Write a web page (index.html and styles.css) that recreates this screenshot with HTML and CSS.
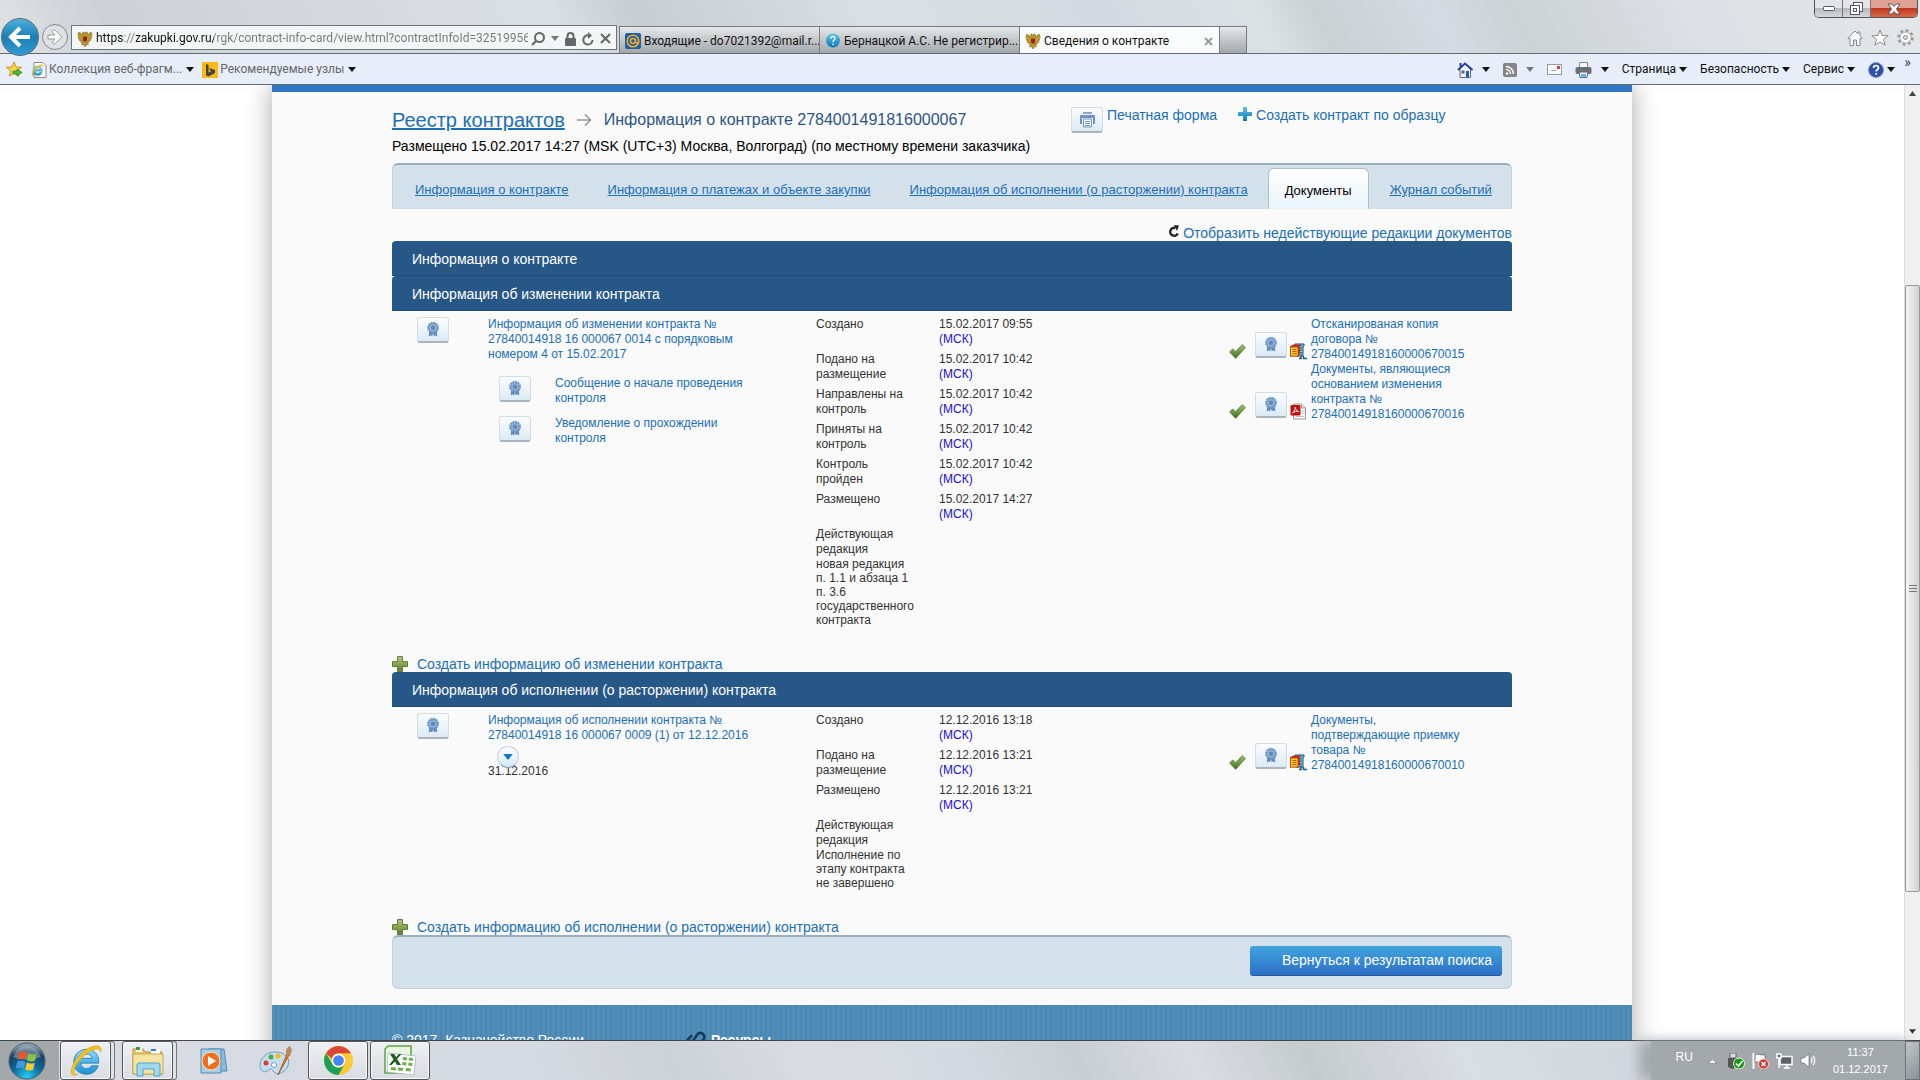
FILE: index.html
```html
<!DOCTYPE html>
<html lang="ru">
<head>
<meta charset="utf-8">
<title>Сведения о контракте</title>
<link rel="stylesheet" href="styles.css">
</head>
<body>
<svg class="sprite" aria-hidden="true">
  <defs>
    <linearGradient id="g-check" x1="0" y1="0" x2="0" y2="1"><stop offset="0" stop-color="#9cc46b"/><stop offset="1" stop-color="#3f6e1c"/></linearGradient>
    <linearGradient id="g-plus" x1="0" y1="0" x2="0" y2="1"><stop offset="0" stop-color="#b3cb84"/><stop offset="1" stop-color="#577f1e"/></linearGradient>
    <linearGradient id="g-blue" x1="0" y1="0" x2="0" y2="1"><stop offset="0" stop-color="#5fc4e8"/><stop offset="1" stop-color="#0f79b5"/></linearGradient>
    <radialGradient id="g-orb" cx=".5" cy=".95" r=".9"><stop offset="0" stop-color="#25d0f5"/><stop offset=".45" stop-color="#0e6a9c"/><stop offset=".8" stop-color="#1d3f5e"/><stop offset="1" stop-color="#90a4b5"/></radialGradient>
    <linearGradient id="g-ie" x1="0" y1="0" x2="0" y2="1"><stop offset="0" stop-color="#8fdcf8"/><stop offset="1" stop-color="#1a8fd2"/></linearGradient>
  </defs>
  <symbol id="i-medal" viewBox="0 0 16 18">
    <path d="M4 10 3 17l2.500-1.500L7 17l1-4 1 4 1.500-1.500L13 17l-1-7z" fill="#5d88b8"/>
    <circle cx="8" cy="7" r="5.800" fill="#7ea3cd" stroke="#6b94c2" stroke-width="2" stroke-dasharray="2 1"/>
    <circle cx="8" cy="7" r="3.300" fill="#5c8abf" stroke="#a9c4e0"/>
  </symbol>
  <symbol id="i-check" viewBox="0 0 16 14"><path d="M.5 7.500 3.500 4.500 6 7.200 12.500.5l3 2.800L6.300 13.500z" fill="url(#g-check)" stroke="#5d7f42" stroke-width=".7"/></symbol>
  <symbol id="i-plus" viewBox="0 0 16 16"><path d="M5.500.6h5v5h5v5h-5v5h-5v-5h-5v-5h5z" fill="url(#g-plus)" stroke="#5c7a35"/></symbol>
  <symbol id="i-zip" viewBox="0 0 17 17">
    <path d="M5 1h9v2h-1v10H6z" fill="#8fd0ee" stroke="#14506f"/>
    <path d="M11 1.500v12" stroke="#2676a3" stroke-width="2" stroke-dasharray="1.500 1"/>
    <path d="M0 3.500 3 1.500h7V11l-2 2.500H0z" fill="#c22f1c"/><rect x=".5" y="4" width="7.500" height="9" fill="#fccb1c" stroke="#a2441a" stroke-width=".7"/>
    <path d="M2.500 6.500h4M2.500 8.500h4M2.500 10.500h4" stroke="#b45a0c"/><path d="M9 15.500h2V13M13.500 13v2.500H17" stroke="#1c5c80" stroke-width="1.500" fill="none"/>
  </symbol>
  <symbol id="i-pdf" viewBox="0 0 16 17">
    <path d="M3 1h8l4 4v11H3z" fill="#fafafa" stroke="#999"/><path d="M11 1v4h4" fill="#ddd" stroke="#999"/>
    <path d="M11 8h3M11 10h3M5 13.500h8" stroke="#bbb"/>
    <rect x="0" y="2" width="10" height="10.500" rx="1" fill="#c01010"/>
    <path d="M2 10c2-2 3-5 2.700-6 .3 2 1.500 4 3.300 4.500-2-.5-4 0-6 1.500z" fill="none" stroke="#fff" stroke-width=".9"/>
  </symbol>
  <symbol id="i-eagle" viewBox="0 0 16 18">
    <path d="M1 3c2-1 3 0 4 2l1-3h1l1 2 1-2h1l1 3c1-2 2-3 4-2l-1 1 1.500 1L14 6.500l1 1.500-1.800.5.800 1.800-2 .2v2l-2-.5 1.500 3-2-.5L8 17l-1.500-2.500-2 .5L6 12l-2 .5v-2l-2-.2.800-1.800L1 8l1-1.500L.5 5 2 4z" fill="#b89a2c" stroke="#7c6412" stroke-width=".6"/>
    <path d="M6 6.500h4v4L8 12l-2-1.500z" fill="#a51d1a"/>
  </symbol>
  <symbol id="i-e" viewBox="0 0 32 32">
    <path d="M28 18H11c.5 3.500 2.500 5 5.500 5 2.300 0 3.600-.8 4.500-2.500h6.500C26 25.500 22 28.500 16.500 28.500 9.500 28.500 4.500 24 4.500 17S9.500 5 16.500 5 28.500 10 28 18zM11.300 13.500h10.300c-.5-2.700-2.300-4-5-4s-4.600 1.300-5.300 4z" fill="url(#g-ie)" stroke="#1377b3" stroke-width=".7"/>
    <path d="M3 29C-1 25 8 8 20 3c5-2 9-2 10 1 .6 1.500 0 3-.5 4 0-3-2-4-6-2.500C13 9 3 23 5 27.500c.5 1 2 1 3.500.5-2 1.500-4 2-5.500 1z" fill="#f4bf20" stroke="#c9951a" stroke-width=".4"/>
  </symbol>
  <symbol id="i-caret" viewBox="0 0 8 5"><path d="M0 0h8L4 5z" fill="currentColor"/></symbol>
</svg>

<div class="desktop">
  <header class="browser">
    <div class="window-buttons">
      <button aria-label="Свернуть"><svg width="12" height="6"><rect x=".5" y=".5" width="11" height="4" rx="1" fill="#fff" stroke="#555"/></svg></button>
      <button aria-label="Восстановить"><svg width="13" height="13" fill="#fff" stroke="#555"><rect x="3.500" y=".5" width="9" height="9"/><rect x=".5" y="3.500" width="9" height="9"/><rect x="3.500" y="6.500" width="3" height="3"/></svg></button>
      <button class="close" aria-label="Закрыть"><svg width="14" height="12"><path d="M1 1h4l2 2.500L9 1h4L9.500 6l3.500 5H9L7 8.500 5 11H1l3.500-5z" fill="#fff" stroke="#555"/></svg></button>
    </div>
    <div class="nav-row">
      <div class="nav-buttons">
        <button class="back" aria-label="Назад"><svg width="24" height="22" fill="none" stroke="#fff" stroke-width="4"><path d="M22 11H4M12 2l-9 9 9 9"/></svg></button>
        <button class="forward" aria-label="Вперёд"><svg width="16" height="16" fill="#fff" stroke="#999"><path d="M1 6h7L5 2.500 7.500.8 15 8l-7.500 7.200L5 13.500 8 10H1z"/></svg></button>
      </div>
      <div class="address">
        <svg width="16" height="18"><use href="#i-eagle"/></svg>
        <input aria-label="Адрес" value="https://zakupki.gov.ru/rgk/contract-info-card/view.html?contractInfoId=32519956">
        <button aria-label="Поиск"><svg width="14" height="14" fill="none" stroke="#666" stroke-width="2"><circle cx="8.500" cy="5.500" r="4.500"/><path d="M5 9l-4 4"/></svg></button>
        <button class="muted" aria-label="Показать адреса"><svg width="8" height="5"><use href="#i-caret"/></svg></button>
        <svg class="lock" width="11" height="14"><rect y="6" width="11" height="8" rx="1" fill="#666"/><path d="M2.500 6V4a3 3 0 0 1 6 0v2" fill="none" stroke="#666" stroke-width="2"/></svg>
        <button aria-label="Обновить"><svg width="12" height="14" fill="none" stroke="#666" stroke-width="2"><path d="M10.500 8A4.600 4.600 0 1 1 7 3.500"/><path d="M6 0l4 3.500L6 7z" fill="#666" stroke="none"/></svg></button>
        <button aria-label="Остановить"><svg width="11" height="11" stroke="#666" stroke-width="2"><path d="M1 1l9 9M10 1l-9 9"/></svg></button>
      </div>
      <nav class="tabs" aria-label="Вкладки">
        <button class="tab"><svg width="16" height="16"><rect width="16" height="16" rx="2" fill="#1a62a8"/><circle cx="8" cy="8" r="5.800" fill="none" stroke="#f5ab24" stroke-width="1.500"/><circle cx="8" cy="8" r="2.500" fill="none" stroke="#f5ab24" stroke-width="1.500"/><path d="M10.500 6v3q1 2 3 0" fill="none" stroke="#f5ab24" stroke-width="1.500"/></svg><span>Входящие - do7021392@mail.r...</span></button>
        <button class="tab"><svg width="16" height="16"><circle cx="8" cy="7.500" r="7" fill="url(#g-blue)"/><path d="M5.800 5.500q.2-2 2.200-2t2 1.900c0 1.600-2 1.500-2 3.600M8 10.500v1.500" fill="none" stroke="#fff" stroke-width="1.400"/></svg><span>Бернацкой А.С. Не регистрир...</span></button>
        <button class="tab current"><svg width="16" height="18"><use href="#i-eagle"/></svg><span>Сведения о контракте</span><svg class="tab-close" width="9" height="9" stroke="#999" stroke-width="2"><path d="M1 1l7 7M8 1l-7 7"/></svg></button>
        <button class="tab new" aria-label="Новая вкладка"></button>
      </nav>
      <div class="tools">
        <button aria-label="Домой"><svg width="16" height="16" fill="#fff" stroke="#888"><path d="M8 1 .8 8l1 1L3 8v7.500h3.500V10h3v5.500H13V8l1.200 1 1-1L13 5.800V2h-2v2z"/></svg></button>
        <button aria-label="Избранное"><svg width="18" height="17" fill="#fff" stroke="#888"><path d="M9 1l2.200 5.500 6 .3-4.700 3.700 1.600 5.700L9 13l-5.100 3.200 1.600-5.700L.8 6.800l6-.3z"/></svg></button>
        <button aria-label="Сервис"><svg width="17" height="17"><circle cx="8.500" cy="8.500" r="6.700" fill="none" stroke="#999" stroke-width="3" stroke-dasharray="2.700 2.560"/><circle cx="8.500" cy="8.500" r="5.500" fill="#fff" stroke="#aaa"/><circle cx="8.500" cy="8.500" r="2" fill="#ddd" stroke="#888"/></svg></button>
      </div>
    </div>
    <div class="command-bar">
      <div class="favorites">
        <button aria-label="Добавить на панель избранного"><svg width="17" height="17"><path d="M8 1l2 5 5.500.3-4.300 3.500 1.500 5.400L8 12.200l-4.700 3 1.500-5.400L.5 6.300 6 6z" fill="#fbd84a" stroke="#c79418"/><path d="M7 10h4V8l5 3.500-5 3.500v-2H7z" fill="#53b53a" stroke="#2b7a1a" stroke-width=".7"/></svg></button>
        <button class="fav"><svg width="16" height="16"><path d="M3 .5h9l3 3v12H3z" fill="#fff" stroke="#888"/></svg><svg class="over" width="13" height="13"><use href="#i-e"/></svg>Коллекция веб-фрагм...<svg class="caret" width="8" height="5"><use href="#i-caret"/></svg></button>
        <button class="fav"><svg width="16" height="16"><rect width="16" height="16" fill="#fbb90f"/><path d="M4 2l2.500 1v7.500L9.500 9 8 8.400 7.200 6 13 8v3l-6.500 3.600L4 13.200z" fill="#444"/></svg>Рекомендуемые узлы<svg class="caret" width="8" height="5"><use href="#i-caret"/></svg></button>
      </div>
      <div class="commands">
        <button aria-label="Домашняя страница"><svg width="16" height="16"><path d="M3 7v8.500h10.500V7L8 2z" fill="#eef3fa" stroke="#667"/><path d="M1 8 8 1.500 15.500 8M3.500 1v4" fill="none" stroke="#2b3fa8" stroke-width="2"/><rect x="9" y="9" width="3" height="6.500" fill="#1c5fa8"/><rect x="4.500" y="8.500" width="3" height="3" fill="#567"/></svg><svg class="caret wide" width="8" height="5"><use href="#i-caret"/></svg></button>
        <button class="muted" aria-label="Каналы"><svg width="14" height="14"><rect width="14" height="14" rx="2" fill="#858585"/><path d="M3 6.500A4.500 4.500 0 0 1 7.500 11M3 3.500A7.500 7.500 0 0 1 10.500 11" fill="none" stroke="#fff" stroke-width="1.500"/><circle cx="4" cy="10.500" r="1.200" fill="#fff"/></svg><svg class="caret wide" width="8" height="5"><use href="#i-caret"/></svg></button>
        <button aria-label="Почта"><svg width="15" height="11"><rect x=".5" y=".5" width="14" height="10" fill="#fafafa" stroke="#999"/><rect x="10" y="2" width="3" height="3" fill="#c44"/><path d="M4 6.500h5" stroke="#aaa"/></svg></button>
        <button aria-label="Печать"><svg width="17" height="16"><path d="M4.500.5h8V6h-8z" fill="#fff" stroke="#888"/><rect x=".5" y="5" width="16" height="7" rx="2" fill="#6b6f73"/><path d="M4 10h9l-1 5.500H5z" fill="#e8f2fa" stroke="#667"/><path d="M6 13.500h5" stroke="#2b9bd0" stroke-width="2"/></svg><svg class="caret wide" width="8" height="5"><use href="#i-caret"/></svg></button>
        <button>Страница<svg class="caret" width="8" height="5"><use href="#i-caret"/></svg></button>
        <button>Безопасность<svg class="caret" width="8" height="5"><use href="#i-caret"/></svg></button>
        <button>Сервис<svg class="caret" width="8" height="5"><use href="#i-caret"/></svg></button>
        <button aria-label="Справка"><svg width="16" height="16"><circle cx="8" cy="8" r="7.500" fill="#2a50a8" stroke="#8a9bbd"/><path d="M5.500 6q.2-2.500 2.500-2.500T10.500 6c0 1.600-2.300 1.500-2.300 3.600M8.200 11v1.700" fill="none" stroke="#fff" stroke-width="1.700"/></svg><svg class="caret" width="8" height="5"><use href="#i-caret"/></svg></button>
      </div>
      <button class="more" aria-label="Ещё">»</button>
    </div>
  </header>

  <div class="viewport">
    <div class="scroll-area">
      <div class="page">
        <main class="content">
          <div class="page-head">
            <div class="heading">
              <h1><a href="#registry">Реестр контрактов</a><svg width="15" height="14" fill="none" stroke="#999" stroke-width="1.500"><path d="M0 7h13M8 1.500 13.500 7 8 12.500"/></svg><span>Информация о контракте 2784001491816000067</span></h1>
              <p>Размещено 15.02.2017 14:27 (MSK (UTC+3) Москва, Волгоград) (по местному времени заказчика)</p>
            </div>
            <div class="actions">
              <a class="print" href="#print"><span class="tile"><svg width="17" height="17"><path d="M4 1h9v2H4z" fill="#8aa8cb"/><path d="M1 5q0-1 1-1h13q1 0 1 1v8h-2V7H3v6H1z" fill="#7095c0"/><path d="M4.500 8h8v8h-8z" fill="#fff" stroke="#7095c0"/><path d="M6 10.500h5M6 12.500h5M6 14.500h5" stroke="#7095c0"/></svg></span>Печатная форма</a>
              <a class="create" href="#copy"><svg width="14" height="14"><path d="M5 0h4v5h5v4H9v5H5V9H0V5h5z" fill="url(#g-blue)"/></svg>Создать контракт по образцу</a>
            </div>
          </div>

          <nav class="page-tabs" aria-label="Разделы контракта">
            <a href="#info">Информация о контракте</a>
            <a href="#payments">Информация о платежах и объекте закупки</a>
            <a href="#execution">Информация об исполнении (о расторжении) контракта</a>
            <a class="active" href="#docs" aria-current="page">Документы</a>
            <a href="#journal">Журнал событий</a>
          </nav>

          <div class="toggle"><a href="#old"><svg width="12" height="13"><path d="M9.800 8.500A4 4 0 1 1 7.500 3" fill="none" stroke="#222" stroke-width="2.400"/><path d="M6 0l5 .5L9 6z" fill="#222"/></svg>Отобразить недействующие редакции документов</a></div>

          <h2 class="bar">Информация о контракте</h2>
          <h2 class="bar">Информация об изменении контракта</h2>
          <section class="record">
            <div class="sign"><button class="tile" aria-label="Подпись"><svg width="14" height="17"><use href="#i-medal"/></svg></button></div>
            <div class="subject">
              <a href="#change">Информация об изменении контракта № 27840014918 16 000067 0014 с порядковым номером 4 от 15.02.2017</a>
              <ul class="notices">
                <li><button class="tile" aria-label="Подпись"><svg width="14" height="17"><use href="#i-medal"/></svg></button><a href="#n1">Сообщение о начале проведения контроля</a></li>
                <li><button class="tile" aria-label="Подпись"><svg width="14" height="17"><use href="#i-medal"/></svg></button><a href="#n2">Уведомление о прохождении контроля</a></li>
              </ul>
            </div>
            <table class="events">
              <tr><th scope="row">Создано</th><td>15.02.2017 09:55<br><span>(МСК)</span></td></tr>
              <tr><th scope="row">Подано на<br>размещение</th><td>15.02.2017 10:42<br><span>(МСК)</span></td></tr>
              <tr><th scope="row">Направлены на<br>контроль</th><td>15.02.2017 10:42<br><span>(МСК)</span></td></tr>
              <tr><th scope="row">Приняты на<br>контроль</th><td>15.02.2017 10:42<br><span>(МСК)</span></td></tr>
              <tr><th scope="row">Контроль<br>пройден</th><td>15.02.2017 10:42<br><span>(МСК)</span></td></tr>
              <tr><th scope="row">Размещено</th><td>15.02.2017 14:27<br><span>(МСК)</span></td></tr>
              <tr class="note"><th scope="row">Действующая<br>редакция<p>новая редакция<br>п. 1.1 и абзаца 1<br>п. 3.6<br>государственного<br>контракта</p></th><td></td></tr>
            </table>
            <ul class="files">
              <li><svg class="ok" width="17" height="15"><use href="#i-check"/></svg><button class="tile" aria-label="Подпись"><svg width="14" height="17"><use href="#i-medal"/></svg></button><svg class="type" width="17" height="17"><use href="#i-zip"/></svg><a href="#f1">Отсканированая копия договора № 27840014918160000670015</a></li>
              <li><svg class="ok" width="17" height="15"><use href="#i-check"/></svg><button class="tile" aria-label="Подпись"><svg width="14" height="17"><use href="#i-medal"/></svg></button><svg class="type" width="17" height="17"><use href="#i-pdf"/></svg><a href="#f2">Документы, являющиеся основанием изменения контракта № 27840014918160000670016</a></li>
            </ul>
          </section>
          <a class="add" href="#add-change"><svg width="16" height="16"><use href="#i-plus"/></svg>Создать информацию об изменении контракта</a>

          <h2 class="bar">Информация об исполнении (о расторжении) контракта</h2>
          <section class="record">
            <div class="sign"><button class="tile" aria-label="Подпись"><svg width="14" height="17"><use href="#i-medal"/></svg></button></div>
            <div class="subject">
              <a href="#exec">Информация об исполнении контракта № 27840014918 16 000067 0009 (1) от 12.12.2016</a>
              <p class="stage-date">31.12.2016<button aria-label="Развернуть"><svg width="10" height="6"><use href="#i-caret"/></svg></button></p>
            </div>
            <table class="events">
              <tr><th scope="row">Создано</th><td>12.12.2016 13:18<br><span>(МСК)</span></td></tr>
              <tr><th scope="row">Подано на<br>размещение</th><td>12.12.2016 13:21<br><span>(МСК)</span></td></tr>
              <tr><th scope="row">Размещено</th><td>12.12.2016 13:21<br><span>(МСК)</span></td></tr>
              <tr class="note"><th scope="row">Действующая<br>редакция<p>Исполнение по<br>этапу контракта<br>не завершено</p></th><td></td></tr>
            </table>
            <ul class="files">
              <li><svg class="ok" width="17" height="15"><use href="#i-check"/></svg><button class="tile" aria-label="Подпись"><svg width="14" height="17"><use href="#i-medal"/></svg></button><svg class="type" width="17" height="17"><use href="#i-zip"/></svg><a href="#f3">Документы, подтверждающие приемку товара № 27840014918160000670010</a></li>
            </ul>
          </section>
          <a class="add" href="#add-exec"><svg width="16" height="16"><use href="#i-plus"/></svg>Создать информацию об исполнении (о расторжении) контракта</a>

          <div class="return-panel"><button>Вернуться к результатам поиска</button></div>
        </main>
        <footer class="site-footer">
          <p>© 2017&nbsp; Казначейство России</p>
          <p class="resources"><svg width="24" height="20" fill="none" stroke="#123a58" stroke-width="2.500"><path d="M1 12l7-8M6 14l7-10q3-4 6-1t0 6l-8 9"/></svg><strong>Ресурсы</strong></p>
        </footer>
      </div>
    </div>
    <div class="scrollbar" aria-hidden="true">
      <svg width="7" height="5"><path d="M0 5 3.500 0 7 5z" fill="#444"/></svg>
      <div class="track"><div class="thumb"><svg width="8" height="8" stroke="#777"><path d="M0 .5h8M0 3.500h8M0 6.500h8"/></svg></div></div>
      <svg width="7" height="5"><use href="#i-caret"/></svg>
    </div>
  </div>

  <footer class="taskbar">
    <div class="launch">
      <button class="start" aria-label="Пуск"><svg width="38" height="38" viewBox="0 0 38 38"><circle cx="19" cy="19" r="18" fill="url(#g-orb)" stroke="#4a6070"/><path d="M5 15q4-11 14-11t14 11q-14 5-28 0z" fill="#fff" opacity=".3"/><path d="M11 10.500q4-2 8 .3l-1.300 7q-4-2-8-.2z" fill="#e8562a"/><path d="M20.500 11.500q4 2 8 .2l-1.500 7q-4 1.800-8-.3z" fill="#8cc43c"/><path d="M9.300 19.500q4-1.800 8 .2l-1.500 7q-4-2-8-.2z" fill="#3f9be0"/><path d="M18.700 20.500q4 2 8 .2l-1.500 7q-4 1.800-8-.3z" fill="#fbc92c"/></svg></button>
      <button class="task open stack" aria-label="Internet Explorer"><svg width="34" height="34"><use href="#i-e"/></svg></button>
      <button class="task open stack" aria-label="Проводник"><svg width="34" height="32" viewBox="0 0 34 32"><path d="M2 4h10l2 3h17v22H2z" fill="#e6c766" stroke="#b4923a"/><path d="M5 2h6v5H5z" fill="#fff"/><path d="M5 2h4v3H5z" fill="#3a9a3c"/><path d="M20 4h9v5h-9z" fill="#fff"/><path d="M20 4h5v2h-5z" fill="#2b7fd0"/><path d="M2 9h30v20H2z" fill="#f6e4a0" stroke="#c8a850"/><path d="M6 31V20q0-2 2-2h19q2 0 2 2v11h-6v-7H12v7z" fill="#9fd8f0" stroke="#4ba3cc"/></svg></button>
      <button class="task" aria-label="Проигрыватель"><svg width="30" height="28" viewBox="0 0 30 28"><path d="M9 2h16l3 22H11z" fill="#8ebbdc" stroke="#4f8ab5"/><path d="M2 2h20v24H2z" fill="#a5cfe9" stroke="#4f8ab5"/><circle cx="12" cy="14" r="9" fill="#ee6f1c" stroke="#fbe0c4"/><path d="M9 9v10l8-5z" fill="#fff"/></svg></button>
      <button class="task" aria-label="Paint"><svg width="34" height="32" viewBox="0 0 34 32"><path d="M16 7C7 7 1 14 1 20s4 8 7 6 4-3 6 0 6 4 11 0 6-10 3-14-7-5-12-5z" fill="#c4def0" stroke="#6d9dc2"/><circle cx="7" cy="18" r="2.500" fill="#d9402e"/><circle cx="12" cy="12" r="2.500" fill="#4cab44"/><circle cx="19" cy="11" r="2.500" fill="#f5b91f"/><circle cx="15" cy="20" r="2.500" fill="#fff" stroke="#6d9dc2"/><path d="M19 30 28 9l2 1z" fill="#e8812a" stroke="#b85c14"/><path d="M27 9q-1-6 4-8l2 4-2 6z" fill="#b98a5a"/></svg></button>
      <button class="task open" aria-label="Google Chrome"><svg width="31" height="31" viewBox="-15 -15 30 30"><circle r="14" fill="#fbc934"/><path d="M-12.100-7A14 14 0 0 1 12.100-7L0-7A7 7 0 0 0-6.500-2z" fill="#dc4437"/><path d="M-12.100-7A14 14 0 0 0 0 14L6.100 3.500A7 7 0 0 1-6.100 3.500z" fill="#1aa05c"/><circle r="6.500" fill="#fff"/><circle r="5.200" fill="#4285f4"/></svg></button>
      <button class="task open" aria-label="Excel"><svg width="32" height="31" viewBox="0 0 32 31"><path d="M4 1h23v20L21 28H1V4z" fill="#eaf5e3" stroke="#5aa545" stroke-width="1.500"/><path d="M4 8l28 3-2 19-27-3z" fill="#fff" stroke="#aab" stroke-width=".7"/><path d="M19 12l4 .4-.3 3-4-.4zM25 12.500l4 .4-.3 3-4-.4zM18.500 17l4 .4-.3 3-4-.4zM24.500 17.500l4 .4-.3 3-4-.4zM7 22l5 .4-.3 3-5-.4zM14 22.500l5 .4-.3 3-5-.4zM22 23l5 .4-.3 3-5-.4z" fill="#6cb04a"/><path d="M6 9h4l2 3 3-3h2.500l-4.500 5 4 6h-4l-2-3.500L7.500 20H5l4.500-5.500z" fill="#1d5c1f"/></svg></button>
    </div>
    <div class="tray">
      <span class="lang">RU</span>
      <button aria-label="Скрытые значки"><svg width="9" height="6"><path d="M.5 5.500 4.500 1l4 4.500z" fill="#fff" stroke="#666" stroke-width=".5"/></svg></button>
      <svg width="17" height="16"><rect x="2" width="6" height="5" fill="#ddd" stroke="#666"/><path d="M0 5h9v7l-4 4-5-2z" fill="#555"/><circle cx="11" cy="10.500" r="5.500" fill="#189818" stroke="#dfd"/><path d="M8 10.500l2.500 2.500 4-5" fill="none" stroke="#fff" stroke-width="1.700"/></svg>
      <svg width="17" height="16"><path d="M1.500 0v16" stroke="#fff" stroke-width="2"/><path d="M3 1.500q3-1 5 0t5 0v8q-3 1-5 0t-5 0z" fill="#fff" stroke="#555" stroke-width=".7"/><circle cx="11.500" cy="11" r="5" fill="#d8352a" stroke="#fcc"/><path d="M9.500 9l4 4M13.500 9l-4 4" stroke="#fff" stroke-width="1.700"/></svg>
      <svg width="17" height="16" fill="#5c6468" stroke="#fff" stroke-width="1.500"><path d="M4 3.500h12v8H4zM8 15h6M11 12v3"/><path d="M1 1h4v4H1zM3 5v10"/></svg>
      <svg width="17" height="15"><path d="M1 5h3l5-4.500v14L4 10H1z" fill="#fff" stroke="#555" stroke-width=".6"/><path d="M11 5q2 2.500 0 5M13 3q3.500 4.500 0 9" fill="none" stroke="#fff" stroke-width="1.300"/></svg>
      <time class="clock" datetime="2017-12-01T11:37">11:37<br>01.12.2017</time>
      <button class="show-desktop" aria-label="Свернуть все окна"></button>
    </div>
  </footer>
</div>
</body>
</html>
```
FILE: styles.css
```css
* { box-sizing: border-box; }

body, h1, h2, p, ul { margin: 0; padding: 0; }

body {
  font: 12px/15px "Liberation Sans", Arial, sans-serif;
  color: #333;
  background: #fff;
}

ul { list-style: none; }

a { color: #1b6fb5; text-decoration: none; }

button {
  margin: 0;
  padding: 0;
  border: 0;
  background: none;
  font: inherit;
  color: inherit;
  display: flex;
  align-items: center;
}

svg { display: block; flex: none; }

.sprite { position: absolute; width: 0; height: 0; }

.desktop {
  display: flex;
  flex-direction: column;
  height: 100vh;
  overflow: hidden;
}

/* Browser frame */

.browser {
  position: relative;
  font-family: Roboto, "Noto Sans", sans-serif;
  color: #111;
  background: linear-gradient(65deg, #e2e6e7 0, #cdd1d6 7%, #d6dade 20%, #dadfe3 30%, #c8cdd1 34%, #dadfe3 46%, #d5dae2 58%, #dbe0e3 66%, #cbd0d3 69%, #d6dbe3 75%, #cdd2d5 79%, #dce0e4 88%, #e4e7e9 100%);
}

.window-buttons {
  position: absolute;
  top: 0;
  right: 2px;
  display: flex;
  height: 18px;
  border: 1px solid #555;
  border-top: 0;
  border-radius: 0 0 5px 5px;
  overflow: hidden;
}

.window-buttons button {
  width: 28px;
  justify-content: center;
  border-right: 1px solid #777;
  background: linear-gradient(#e3e6e8 45%, #b5babe 50%, #d5d9dc);
}

.window-buttons .close {
  width: 46px;
  border: 0;
  background: linear-gradient(#e0a093 45%, #bf3a20 50%, #d9694c);
}

.nav-row {
  display: flex;
  align-items: flex-end;
  height: 54px;
  padding-top: 19px;
  border-bottom: 1px solid #666b72;
}

.nav-buttons {
  display: flex;
  align-items: center;
  align-self: flex-start;
  width: 71px;
  height: 35px;
}

.back {
  width: 38px;
  height: 38px;
  margin-left: 1px;
  justify-content: center;
  flex: none;
  border: 1px solid #5b6b78;
  border-radius: 50%;
  background: linear-gradient(#4fb0dc, #1b7fb8 50%, #2f9bd0);
}

.forward {
  width: 26px;
  height: 26px;
  margin-left: 3px;
  justify-content: center;
  border: 1px solid #888;
  border-radius: 50%;
  background: #dfe2e5;
}

.address {
  display: flex;
  align-items: center;
  gap: 6px;
  width: 546px;
  height: 25px;
  margin: 0 2px 3px 0;
  padding: 2px 5px 0;
  border: 1px solid #70757b;
  background: #f4f5f6;
}

.address input {
  flex: 1;
  min-width: 0;
  margin: 0 -3px;
  padding: 0;
  border: 0;
  font: inherit;
  color: transparent;
  background: linear-gradient(90deg, #111 27px, #777 27px 40px, #111 40px 118px, #777 118px) text;
}

.muted { color: #777; }

.tabs {
  display: flex;
  height: 27px;
}

.tab {
  width: 200px;
  height: 27px;
  padding: 2px 4px 0 5px;
  gap: 3px;
  border: 1px solid #777c80;
  border-width: 1px 0 0 1px;
  background: linear-gradient(#e6e8e9, #a3a7aa);
  white-space: nowrap;
}

.tab.current { background: #fbfcfd; }
.tab-close { margin: 0 2px 0 auto; }
.tab.new { width: 28px; border-right-width: 1px; }

.tools {
  display: flex;
  gap: 8px;
  margin: 0 6px 7px auto;
}

.command-bar {
  display: flex;
  justify-content: space-between;
  height: 31px;
  padding: 1px 0 0 6px;
  border-bottom: 1px solid #666b72;
  background: #e7eefa;
}

.favorites, .commands { display: flex; align-items: center; }
.favorites { gap: 8px; color: #666; }
.favorites .fav { position: relative; gap: 2px; }
.fav .caret { margin-left: 2px; color: #111; }

.fav .over {
  position: absolute;
  left: 0;
  top: 2px;
}

.commands { flex: 1; justify-content: flex-end; gap: 13px; }
.caret { margin-left: 3px; }
.caret.wide { margin-left: 9px; }

.more {
  align-self: flex-start;
  width: 25px;
  justify-content: center;
  color: #446;
  font-size: 14px;
}

/* Page viewport */

.viewport {
  flex: 1;
  display: flex;
  min-height: 0;
}

.scroll-area {
  flex: 1;
  min-width: 0;
  overflow: hidden;
}

.page {
  max-width: 1360px;
  margin: 0 auto;
  border-top: 7px solid #2f76c4;
  background: #fafafa;
  box-shadow: 0 0 24px rgba(0, 0, 0, .35);
}

.content { padding: 14px 120px 16px; }

.page-head {
  display: grid;
  grid-template-columns: 679fr 441fr;
}

.heading { padding: 2px 0 9px; }

h1 {
  display: flex;
  align-items: center;
  margin-bottom: 6px;
  font-size: 16px;
  font-weight: normal;
  line-height: 24px;
  color: #2d5585;
}

h1 a { font-size: 20px; text-decoration: underline; }
h1 svg { margin: 0 12px; }
.heading p { font-size: 14px; line-height: 16px; color: #000; }

.actions {
  display: flex;
  align-items: flex-start;
  gap: 21px;
  padding-top: 1px;
  font-size: 14px;
  line-height: 16px;
}

.actions a { display: flex; gap: 4px; }

.tile {
  display: flex;
  align-items: center;
  justify-content: center;
  flex: none;
  width: 32px;
  height: 26px;
  border: 1px solid #d3dce2;
  border-bottom: 2px solid #a9b4bc;
  border-radius: 3px;
  background: linear-gradient(#fbfdfe, #dceaf5);
}

.page-tabs {
  display: flex;
  align-items: flex-end;
  gap: 2px;
  height: 46px;
  padding-left: 3px;
  border: 1px solid #c3d2dd;
  border-width: 2px 1px 0;
  border-top-color: #98afbd;
  border-radius: 6px 6px 0 0;
  background: #d5e1ea;
  font-size: 13px;
}

.page-tabs a {
  padding: 0 18px 12px 19px;
  text-decoration: underline;
  white-space: nowrap;
}

.page-tabs .active {
  height: 41px;
  padding: 14px 16px 0;
  border: 1px solid #aebfca;
  border-bottom: 0;
  border-radius: 6px 6px 0 0;
  background: linear-gradient(#fff, #e9f4fb);
  color: #000;
  text-decoration: none;
}

.toggle {
  display: flex;
  justify-content: flex-end;
  padding-top: 16px;
  font-size: 14px;
  line-height: 16px;
}

.toggle a { display: flex; gap: 3px; }

.bar {
  height: 35px;
  padding: 1px 0 0 20px;
  border-radius: 4px 4px 0 0;
  background: #275787;
  box-shadow: inset 0 -1px #1f4c79;
  color: #fff;
  font-size: 14px;
  font-weight: normal;
  line-height: 35px;
}

.record {
  display: grid;
  grid-template-columns: 71px 328fr 413fr 283fr;
  align-items: start;
  padding: 6px 0 29px 25px;
}

.subject > a { display: block; max-width: 270px; }
.notices { margin-top: 14px; padding-left: 11px; }

.notices li {
  display: flex;
  gap: 24px;
  min-height: 40px;
}

.notices a { max-width: 195px; }

.stage-date { position: relative; margin-top: 21px; }

.stage-date button {
  position: absolute;
  left: 9px;
  top: -18px;
  width: 22px;
  height: 22px;
  justify-content: center;
  border: 1px solid #c5d3dc;
  border-bottom-color: #93a5b2;
  border-radius: 50%;
  background: linear-gradient(#fff, #d3eaf6);
  color: #0f7abf;
}

.events {
  width: 232px;
  border-collapse: collapse;
  table-layout: fixed;
}

.events th, .events td {
  padding: 0 0 5px;
  font-weight: normal;
  text-align: left;
  vertical-align: top;
  white-space: nowrap;
}

.events th { width: 123px; }
.events span { color: #1a0fd8; }
.events .note th { padding-bottom: 0; }
.events .note p { line-height: 14px; }

.files li {
  display: grid;
  grid-template-columns: 26px 32px 24px 160px;
  align-items: end;
}

.files .tile { margin-bottom: 4px; }
.files .ok { margin-bottom: 3px; }
.files .type { margin: 0 0 2px 3px; }

.add {
  display: flex;
  gap: 9px;
  font-size: 14px;
  line-height: 16px;
}

.return-panel {
  display: flex;
  justify-content: flex-end;
  padding: 9px 9px 12px;
  border: 1px solid #c3d2dd;
  border-top: 2px solid #98afbd;
  border-radius: 6px;
  background: #d5e1ea;
}

.return-panel button {
  height: 30px;
  padding: 0 10px 0 32px;
  border-bottom: 1px solid #2a5a96;
  border-radius: 3px;
  background: linear-gradient(#41a5de, #2c6fc6);
  color: #fff;
  font-size: 14px;
}

.site-footer {
  display: flex;
  height: 160px;
  padding: 26px 120px 0;
  background: repeating-linear-gradient(90deg, #528fb8 0 3px, #4b87b1 3px 5px);
  color: #fff;
  font-size: 14px;
  line-height: 18px;
}

.site-footer p { flex: 0 0 292px; }
.site-footer .resources { display: flex; gap: 3px; }

/* Scroll bar */

.scrollbar {
  display: flex;
  flex-direction: column;
  align-items: center;
  width: 16px;
  padding: 6px 0;
  border-left: 1px solid #ddd;
  background: #f0f0f0;
}

.track {
  flex: 1;
  display: flex;
  flex-direction: column;
  width: 100%;
  padding: 189px 0 137px;
}

.thumb {
  flex: 1;
  display: flex;
  align-items: center;
  justify-content: center;
  border: 1px solid #999;
  border-radius: 2px;
  background: linear-gradient(90deg, #f5f5f5, #d0d0d2);
}

/* Taskbar */

.taskbar {
  display: flex;
  justify-content: space-between;
  height: 40px;
  border-top: 1px solid #444;
  background: linear-gradient(65deg, #d8dbe2 0, #d6dae2 28%, #cdd2d6 35%, #d9dde1 42%, #d5dae2 50%, #c9ced2 56%, #d9dde3 62%, #c6cbcd 68%, #d9dde4 76%, #d3d7de 84%);
}

.launch, .tray { display: flex; align-items: center; }

.start {
  width: 59px;
  height: 39px;
  padding-left: 8px;
  background: #a3a8ab;
}

.task {
  width: 54px;
  height: 39px;
  margin: 0 4px;
  justify-content: center;
}

.task.open {
  width: 60px;
  margin: 0 1px;
  border: 1px solid #555;
  border-radius: 3px;
  background: linear-gradient(#eef0f3, #d9dce2);
  box-shadow: inset 0 0 0 1px #f6f7f9;
}

.task.stack {
  width: 51px;
  margin-right: 10px;
  box-shadow: inset 0 0 0 1px #f6f7f9, 4px 0 0 -1px #dfe2e7, 4px 0 0 0 #777;
}

.tray {
  gap: 7px;
  padding-left: 25px;
  background: #a3a8ab;
  box-shadow: -12px 0 12px #a3a8ab;
  color: #fff;
}

.lang { margin: -6px 8px 0 0; }

.tray button + svg { margin-left: 4px; }

.clock {
  margin: 0 10px 0 9px;
  font-size: 11px;
  line-height: 17px;
  text-align: center;
}

.show-desktop {
  align-self: stretch;
  width: 15px;
  border: 1px solid #6d7478;
  background: linear-gradient(135deg, #c2c6c9, #8b9195);
}
```
